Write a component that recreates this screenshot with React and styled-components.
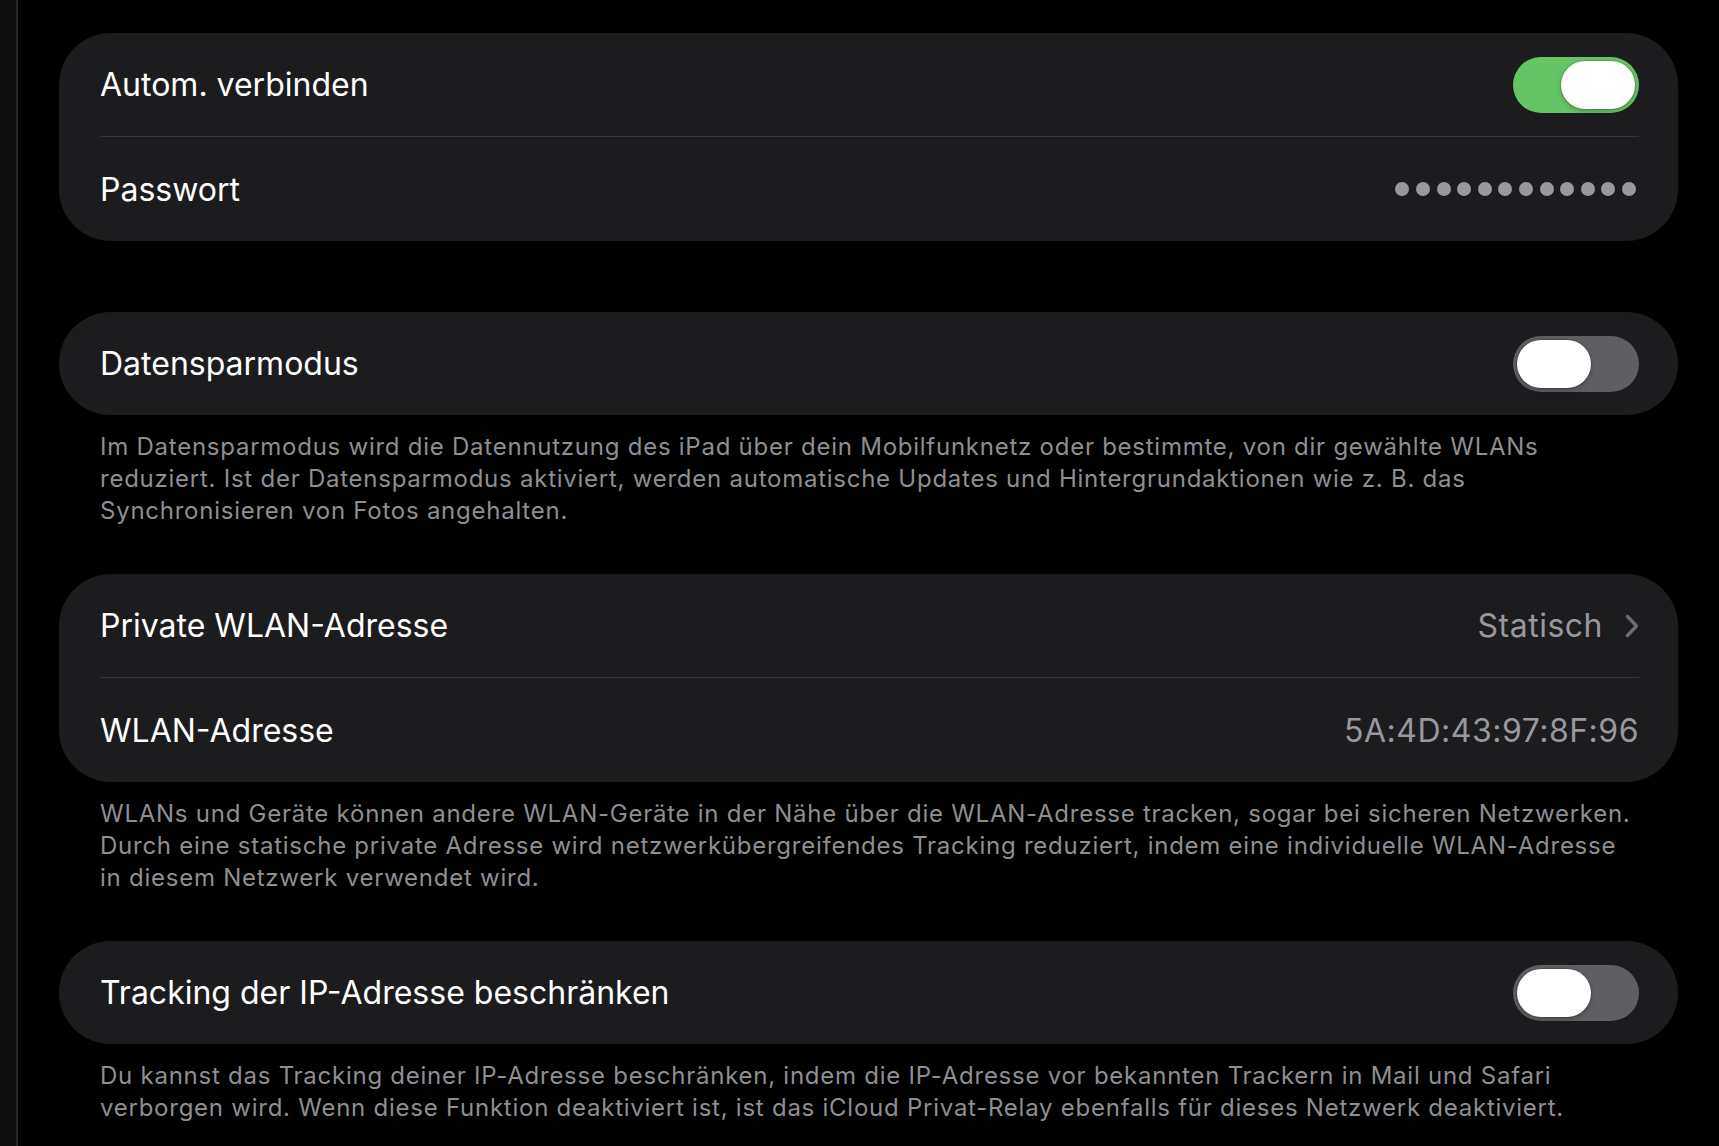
import React from 'react'
import styled, { createGlobalStyle } from 'styled-components'

const GlobalStyle = createGlobalStyle`
    html, body {
        margin: 0;
        padding: 0;
        background: #000;
    }
    body {
        font-family: Inter, "Noto Sans", "Liberation Sans", sans-serif;
        -webkit-font-smoothing: antialiased;
    }
`

const Page = styled.div`
    display: flex;
    min-height: 100vh;
    background: #000;
`

const SideEdge = styled.div`
    width: 16px;
    flex-shrink: 0;
    background: #0e0e0f;
    border-right: 2px solid #262628;
`

const Content = styled.main`
    flex: 1;
    padding: 33px 41px 0;
`

const Group = styled.section`
    background: #1c1c1e;
    border-radius: 52px;
    padding: 0 39px 0 41px;
    margin-top: ${p => p.$gap || 0}px;
`

const Row = styled.div`
    height: 103px;
    display: flex;
    align-items: center;
    justify-content: space-between;

    & + & {
        border-top: 1px solid #38383a;
        height: 105px;
        box-sizing: border-box;
    }
`

const Label = styled.span`
    font-size: 32px;
    color: #fff;
`

const Value = styled.span`
    font-size: 32px;
    color: #98989e;
    letter-spacing: 0.5px;
`

const Right = styled.div`
    display: flex;
    align-items: center;
    gap: 22px;
`

const Footer = styled.p`
    margin: 0;
    padding: 16px 41px 0;
    font-size: 24px;
    line-height: 32px;
    letter-spacing: 0.75px;
    color: #8e8e93;
    white-space: nowrap;
`

const Track = styled.div`
    width: 126px;
    height: 56px;
    box-sizing: border-box;
    padding: 4px;
    border-radius: 28px;
    display: flex;
    justify-content: ${p => (p.$on ? 'flex-end' : 'flex-start')};
    background: ${p => (p.$on ? '#65c466' : '#5f5e63')};
`

const Knob = styled.span`
    width: 74px;
    height: 48px;
    border-radius: 24px;
    background: #fff;
    box-shadow: 0 0 0 1px rgba(0, 0, 0, 0.12), 0 2px 5px rgba(0, 0, 0, 0.25);
`

const Dots = styled.div`
    display: flex;
    gap: 6.6px;
    margin-right: 3px;
`

const Dot = styled.span`
    width: 14px;
    height: 14px;
    border-radius: 50%;
    background: #98989e;
`

const Toggle = ({ on }) => (
    <Track $on={on}>
        <Knob />
    </Track>
)

const Chevron = () => (
    <svg width="14" height="24" viewBox="0 0 14 24" fill="none">
        <path d="M2.5 2.5 L11.5 12 L2.5 21.5" stroke="#6c6c71" strokeWidth="3.4" strokeLinecap="round" strokeLinejoin="round" />
    </svg>
)

const App = () => {
    return (
        <>
            <GlobalStyle />
            <Page>
                <SideEdge />
                <Content>
                    <Group>
                        <Row>
                            <Label>Autom. verbinden</Label>
                            <Toggle on />
                        </Row>
                        <Row>
                            <Label>Passwort</Label>
                            <Dots>
                                {Array.from({ length: 12 }).map((_, i) => <Dot key={i} />)}
                            </Dots>
                        </Row>
                    </Group>

                    <Group $gap={71}>
                        <Row>
                            <Label>Datensparmodus</Label>
                            <Toggle on={false} />
                        </Row>
                    </Group>
                    <Footer>
                        Im Datensparmodus wird die Datennutzung des iPad über dein Mobilfunknetz oder bestimmte, von dir gewählte WLANs<br />
                        reduziert. Ist der Datensparmodus aktiviert, werden automatische Updates und Hintergrundaktionen wie z. B. das<br />
                        Synchronisieren von Fotos angehalten.
                    </Footer>

                    <Group $gap={47}>
                        <Row>
                            <Label>Private WLAN-Adresse</Label>
                            <Right>
                                <Value>Statisch</Value>
                                <Chevron />
                            </Right>
                        </Row>
                        <Row>
                            <Label>WLAN-Adresse</Label>
                            <Value>5A:4D:43:97:8F:96</Value>
                        </Row>
                    </Group>
                    <Footer>
                        WLANs und Geräte können andere WLAN-Geräte in der Nähe über die WLAN-Adresse tracken, sogar bei sicheren Netzwerken.<br />
                        Durch eine statische private Adresse wird netzwerkübergreifendes Tracking reduziert, indem eine individuelle WLAN-Adresse<br />
                        in diesem Netzwerk verwendet wird.
                    </Footer>

                    <Group $gap={47}>
                        <Row>
                            <Label>Tracking der IP-Adresse beschränken</Label>
                            <Toggle on={false} />
                        </Row>
                    </Group>
                    <Footer>
                        Du kannst das Tracking deiner IP-Adresse beschränken, indem die IP-Adresse vor bekannten Trackern in Mail und Safari<br />
                        verborgen wird. Wenn diese Funktion deaktiviert ist, ist das iCloud Privat-Relay ebenfalls für dieses Netzwerk deaktiviert.
                    </Footer>
                </Content>
            </Page>
        </>
    )
}

export default App
